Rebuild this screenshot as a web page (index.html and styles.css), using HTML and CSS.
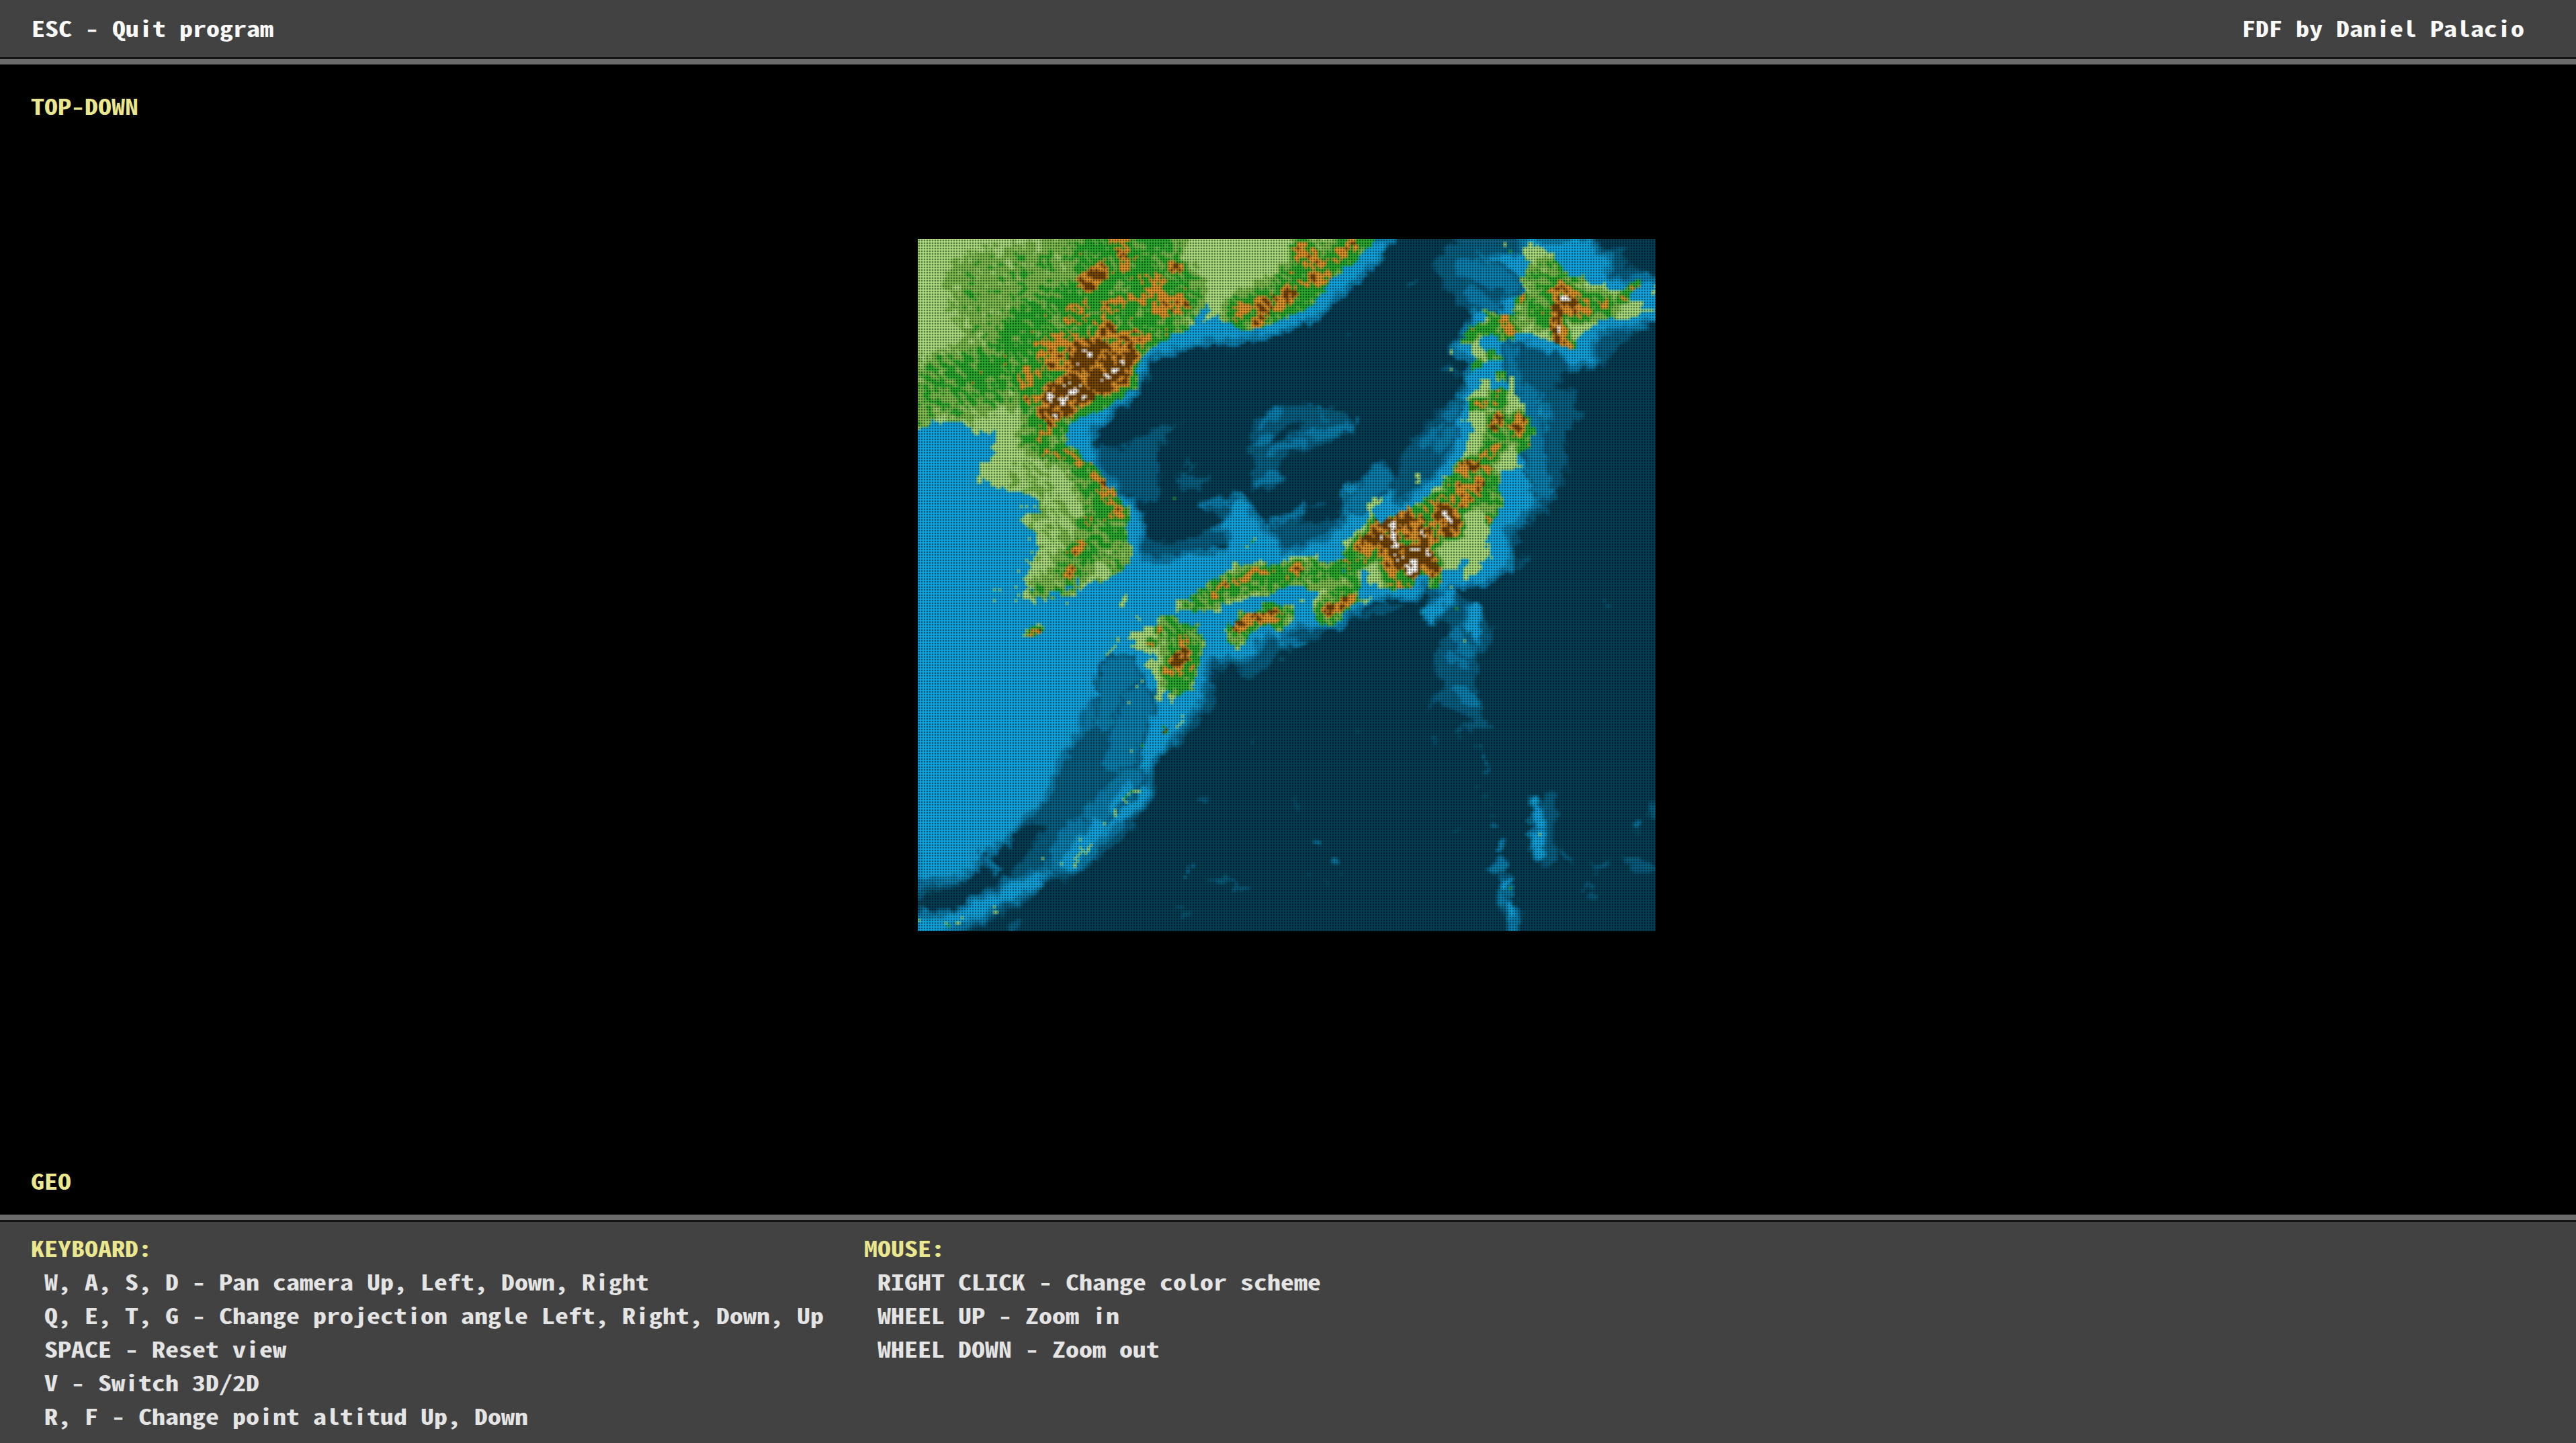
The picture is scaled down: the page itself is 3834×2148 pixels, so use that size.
FILE: index.html
```
<!DOCTYPE html>
<html lang="en">
<head>
<meta charset="utf-8">
<title>FDF</title>
<link rel="stylesheet" href="styles.css">
</head>
<body>
<header class="topbar"><p>ESC - Quit program</p><p>FDF by Daniel Palacio</p></header>
<main class="view">
  <p class="label">TOP-DOWN</p>
  <canvas class="map" id="map" width="1098" height="1030"></canvas>
  <p class="label">GEO</p>
</main>
<footer class="help">
  <section class="keyboard">
    <h2>KEYBOARD:</h2>
    <p>W, A, S, D - Pan camera Up, Left, Down, Right</p>
    <p>Q, E, T, G - Change projection angle Left, Right, Down, Up</p>
    <p>SPACE - Reset view</p>
    <p>V - Switch 3D/2D</p>
    <p>R, F - Change point altitud Up, Down</p>
  </section>
  <section>
    <h2>MOUSE:</h2>
    <p>RIGHT CLICK - Change color scheme</p>
    <p>WHEEL UP - Zoom in</p>
    <p>WHEEL DOWN - Zoom out</p>
  </section>
</footer>
<script src="map.js"></script>
</body>
</html>
```
FILE: styles.css
```
* { box-sizing: border-box; margin: 0; padding: 0; }
body {
  width: 3834px;
  height: 2148px;
  display: flex;
  flex-direction: column;
  overflow: hidden;
  background: #000;
  color: #fafafa;
  font: 700 40px/50px "Noto Sans Mono CJK JP", "Liberation Mono", monospace;
  white-space: nowrap;
}
/* squat terminal lettering, flattened about the baseline */
p, h2 {
  font-size: 40px;
  font-weight: 700;
  transform: scaleY(.79);
  transform-origin: 0 45px;
}
.topbar {
  flex: none;
  height: 96px;
  padding: 12px 77px 0 47px;
  display: flex;
  justify-content: space-between;
  background: #424242;
  border-bottom: 8px solid #6b6b6b;
  box-shadow: inset 0 -3px #141414;
}
.view {
  flex: none;
  height: 1712px;
  padding: 32px 0 30px 46px;
  display: flex;
  flex-direction: column;
  justify-content: space-between;
}
.label, .help h2 { color: #ebe78e; }
.map { display: block; width: 1098px; height: 1030px; margin: 0 0 165px 1320px; }
.help {
  flex: 1;
  padding: 12px 46px 0;
  display: flex;
  background: #424242;
  border-top: 8px solid #6b6b6b;
  box-shadow: inset 0 3px #141414;
  color: #e4e4e4;
}
.keyboard { width: 1240px; }
.help p { padding-left: 20px; }
```
FILE: map.js
```
// Relief map of the Sea of Japan. Coordinates are in map units, 329.4 x 309.
const W = 275, H = 258, S = 275 / 329.4;

const SHELF = [0,80,66,80,84,72,97,66,94,58,99,48,108,43,122,25,134,25,150,34,200,2,205,0,213,0,206,8,197,18,186,27,178,35,168,39,158,43,145,44,128,46,113,50,108,52,103,54,100,61,99,68,93,73,85,79,79,85,78,93,80,101,85,107,92,114,97,119,101,125,100,133,99,139,104,143,118,140,137,138,139,132,132,129,139,122,139,115,146,115,151,125,160,132,164,138,178,135,184,132,190,125,191,110,201,107,210,111,213,118,218,114,225,110,231,103,238,94,239,80,239,72,244,67,243,61,246,55,239,51,239,47,246,39,248,30,262,26,263,21,246,17,244,9,259,6,269,6,269,0,301,0,302,6,309,7,308,17,315,20,323,17,325,15,331,20,331,36,324,38,314,41,305,42,302,45,303,57,289,56,284,51,275,48,264,46,264,52,269,57,272,65,279,71,281,80,279,87,279,115,273,121,269,126,263,128,263,137,265,140,265,146,259,149,255,153,239,155,240,161,228,169,227,165,232,160,230,155,227,154,222,161,214,159,206,161,198,164,191,169,187,174,178,173,168,172,163,177,172,180,162,181,158,178,153,179,151,185,145,189,137,187,131,187,128,205,120,216,109,229,104,234,103,243,104,248,93,259,80,270,79,275,70,281,57,284,53,290,40,297,32,301,18,307,8,310,-1,310,-1,300,11,302,22,297,26,294,36,292,42,285,55,282,65,275,63,267,72,259,83,253,88,245,95,238,93,233,98,225,104,211,100,195,97,191,85,191,79,206,74,211,71,222,61,239,57,250,46,261,40,269,28,275,26,281,18,285,-1,286];

const SLOPE = [
 [79,206,104,206,104,234,93,259,57,284,30,291,-1,306,-1,285,18,285,40,269,61,239],
 [148,81,160,75,172,74,186,76,193,80,191,86,180,92,168,95,160,101,165,106,156,114,149,110,151,101,148,95],
 [90,93,100,87,108,84,117,82,112,88,106,94,107,106,107,117,100,118,92,112,80,102,78,96,82,92],
 [99,130,107,135,123,134,134,126,141,132,118,143,104,144,99,140],
 [127,118,141,113,150,117,153,127,161,126,172,120,183,118,178,124,186,124,190,130,178,137,160,138,140,138,132,132,134,122],
 [115,105,132,105,126,111,116,111],
 [189,111,196,106,203,100,208,98,212,106,218,92,225,84,232,77,239,71,246,65,246,100,219,119,207,121,189,128],
 [229,11,235,3,244,-1,272,-1,272,30,250,38,240,27,234,21],
 [219,20,224,18,222,21,217,23], [229,60,236,57,243,61,235,60],
 [301,-1,308,4,315,5,314,12,319,13,326,15,322,20,315,21,309,18],
 [264,46,283,50,289,56,304,53,305,57,289,59,284,65,293,67,292,73,296,78,288,87,290,97,289,104,288,110,284,112,284,117,273,126,268,128,268,134,265,139,260,130,274,110,276,71,266,57],
 [303,41,319,41,319,44,311,47,310,51,305,57,300,52],
 [227,156,239,156,248,161,253,166,256,174,256,181,250,187,249,192,248,198,252,201,249,206,250,212,256,218,239,219,246,214,241,209,233,206,225,212,230,206,231,203,234,197,230,188,232,181,239,174,234,171,224,170,229,165],
 [219,162,208,168,199,167,191,172,172,181,162,185,157,191,148,195,138,190,132,192,133,207,129,211,118,224,104,236,100,222,128,180],
 [104,232,106,240,106,248,96,262,82,275,70,285,58,287,50,295,35,303,20,309,0,310,0,300,50,275]
];
const TROUGH = [
 [-1,294,18,287,27,281,40,268,52,261,57,262,50,270,42,282,30,291,18,299,4,300],
 [154,94,162,85,171,81,170,86,158,92], [172,122,186,119,180,126,170,128]
];
const BANKS = [ // x1, y1, x2, y2, width, brightness
 [172,88,191,84,4,2],[158,94,172,90,4,2],[153,82,162,77,4,2],[178,75,182,80,2,2],[151,90,156,88,3,2],[151,108,160,106,5,2],
 [158,127,172,121,2.5,2],[128,119,139,117,3,2],[226,90,236,84,5,2],[232,92,238,86,5,2],[236,80,241,74,4,2],[196,118,206,106,9,2],
 [270,68,278,110,10,2],[263,50,268,66,6,2],[247,168,247,178,9,2],[248,166,248,178,6,3],[241,176,246,184,7,2],[236,185,244,190,4,2],[240,200,248,206,5,2],[229,167,237,158,6,3],
 [244,12,264,20,10,2],[246,24,256,30,6,2],[90,195,88,212,18,2],[98,206,90,232,14,2],[96,240,74,262,11,2],[70,262,62,278,8,2],[34,280,30,276,4,2],[0,289,10,287,2,2],
 [94,244,86,254,4,3],[80,262,68,278,7,3],[275,251,279,256,6,1],[282,250,281,276,6,1],[274,251,277,256,4,3],[277,255,277,265,5,3],[277,265,276,274,5,3],
 [261,284,263,300,5,1],[262,287,262,291,3,3],[261,294,265,299,5,2],[265,298,266,309,5,2],[264,297,265,301,3,3],
 [256,262.5,259,262.5,1.5,2],[258,272,261,269,2,2],[258,280,261,277,3,2],[303,280,308,279,4,1],[317,277,321,277,3,1],[321,280,326,280,5,1],[298,288,301,292,2,1],[328,252,328,256,3,1],
 [320,263,322,261,1.5,2],[287,271,291,278,2,1],[177,270,179,269,1.5,2],[185,278,185.6,279,2,2],[229,226,231,222,1.2,1],[249,226,251,226,1.5,1],[251,229,251,230,1,2],[252,233,252,234,1,2],[253,236,253,237,1,2],
 [249,243,250,243,1,1],[253,247,255,247,1,1],[256.5,250,256.5,251,1,1],[256,257,256.5,257,1,1],[169,250,169,254,1,1],[197.5,220,197.5,221,1,1],[188,283,188.5,283,1,1],[182,287,182.5,287,1,1],[174,283,174,283.5,1,1],[240,263,240,264,1,1],
 [130,285,136,285,2,1],[136,285,141,287,1.5,1],[141,287,147,290,2.5,1],[120,282,121,280,1.5,2],[124,279,124,280,1,2],[125,251,128,250.5,1.3,1],[149,224,149,225,1,1],[118,302,121,302,1.5,1],[117,297,117,298,1,1],[43,306,45,304,4,1],
 [307,163,307.6,163,1,2],[268,145,271,144,2,1],[240,220,241,222,1,1],[137,50,138,50,1,1],[192,42,192,43,1,1],[108,86,110,84,2,1],[119,101,120,99,1.5,1],[122,102,124,101,2,1],[196,81,196,83,1.3,2],[200,167,210,164,3,1]
];
const LAND = [
 [-2,-2,206,-2,203,2,200,6,195,9,190,14,186,17,182,23,177,27,172,31,164,35,158,38,151,40,146,41,142,39,136,38,135,33,131,35,127,37,130,31,129,29,127,29,125,34,121,39,117,42,112,42,113,44,107,47,102,50,98,54,97,57,98,61,98,67,93,68,87,73,83,76,73,79,67,83,66,87,65,91,69,93,75,98,80,102,83,107,89,114,93,120,94,127,93,134,95,137,93,145,90,150,84,151,82,154,77,153,71,156,70,160,66,159,61,160,57,162,54,160,52,163,50,160,46,160,48,155,46,152,49,149,51,143,53,139,52,132,50,130,46,126,51,122,57,123,53,120,52,115,46,112,39,112,35,111,30,108,26,109,28,104,27,101,34,98,32,95,35,89,34,85,27,87,22,84,20,81,14,82,10,81,6,82,3,84,-2,85],
 [47,177,47,176,52,173,58,172,57,175,52,177], [90,164,91,159,94,155,93,161,92,164],
 [108,168,112,167,116,167,117,171,120,172,126,172,126,174,123,175,127,177,129,181,126,187,124,195,122,203,118,202,115,206,113,207,113,202,109,200,109,206,106,205,106,198,104,192,102,191,103,187,107,187,105,184,101,185,96,182,98,178,93,178,94,175,100,175,101,172,105,173],
 [115,161,122,160,125,157,132,152,140,147,141,145,145,146,146,144,150,145,154,144,160,145,166,142,173,142,178,141,179,143,184,145,187,143,191,142,188,137,193,132,198,127,200,123,198,120,200,117,207,115,206,117,202,120,203,124,206,127,210,123,218,120,225,116,229,111,233,109,238,105,239,101,243,97,245,90,247,83,246,77,245,72,244,71,249,67,251,65,251,62,255,62,255,67,259,66,263,67,264,62,265,59,266,69,271,73,273,81,274,87,273,93,269,95,267,97,268,102,260,103,259,110,260,117,259,122,257,124,255,129,254,134,257,140,252,143,251,149,246,150,244,153,243,147,246,143,242,142,241,147,233,147,233,152,230,156,228,156,228,151,225,149,222,152,220,156,206,156,204,157,206,154,201,154,199,148,198,148,197,153,196,156,197,159,201,159,201,162,196,161,193,164,190,168,185,173,180,171,176,166,176,161,179,159,179,156,173,156,168,154,162,156,156,159,148,159,144,162,140,162,136,161,134,167,128,165,120,166,115,164],
 [137,173,142,170,142,166,146,167,154,165,156,162,168,163,168,167,164,172,162,176,158,172,152,173,148,176,144,183,141,183,138,179],
 [169,162,173,158,172,162],
 [273,1,277,3,283,7,288,14,295,17,302,21,305,20,310,23,315,23,322,17,323,18,319,23,319,26,322,28,322,32,328,31,327,32,322,34,316,36,304,36,298,41,293,45,293,50,288,48,279,45,274,42,267,42,261,46,257,43,252,43,250,46,251,48,257,50,262,53,261,54,253,54,250,59,246,58,248,53,246,48,242,46,244,41,252,37,254,35,251,33,255,32,262,34,266,33,266,26,270,24,270,17,272,12,269,4],
 [257,63,260,58,263,60,261,63], [221,110,223,107,221,106,223,103,224,107,223,111], [327,23,330,19,330,22,328,25], [324,25,326,23,326,26]
];
const ISLETS = [ // x, y, elevation
 [261,2,.1],[261,1,.1],[263,5,.5],[264,5,.5],[237.5,49,.1],[237,50,.1],[237,57,.1],[242,80.5,.1],[244,80,.1],[146,136.5,.1],[148,134.5,.4],[149,134,.4],[150,133,.1],[114,115.5,.5],[33,156,.1],[36,156,.1],[34,160,.1],[44,158,.1],[43,155,.1],[44,147,.1],[46,119,.1],[48,119,.1],[51,119,.1],[55,119,.1],[49,133,.1],[50,139,.1],[48,143,.1],[43,161,.1],[66,162,.1],[98,169,.1],[97,168,.1],[84,185,.1],[85,183,.1],[86,182,.1],[88,181,.1],[89,177,.1],[89,179,.1],[97,199,.1],[100,197,.1],
 [109,217,.5],[110,218,.8],[109,219,.8],[110,219,.5],[117,212,.1],[117,214,.1],[116,216,.1],[115,217,.1],[92,250,.1],[92,248,.5],[94,247,.1],[95,246,.4],[97,245,.1],[98,245,.1],[87,254,.1],[87,255,.1],[88,256,.1],[83,260,.1],[72,267,.1],[72,271,.1],[77,270,.1],[76,271,.1],[75,272,.1],[74,273,.1],[72,273,.1],[70,275,.1],[70,276,.1],[71,277,.1],[69,279,.1],[69,278,.1],[91,249,.1],[93,247,.1],[96,246,.1],[71,274,.1],[73,272,.1],[55,276,.1],[64,278,.1],[33,297,.1],[34,299,.1],[35,299,.1],[19,302,.1],[18,304,.1],[17,304,.1],[12,304,.1],[13,305,.4],[0,303,.1],[95,228,.1],[100,225.5,.5],[94,206,.1],[277,265,.1],[264,288.5,.5],[237,155,.1],[239,164.5,.5],[243,179,.1],[136,174,.1]
];
const RANGES = [ // x1, y1, x2, y2, radius, height
 [30,22,62,16,20,.33],[27,36,44,30,12,.32],[15,64,60,52,18,.4],[45,42,80,25,15,.43],[0,75,30,60,10,.36],[82,8,110,24,18,.45],[80,40,105,36,18,.44],[74,0,112,2,8,.4],[60,75,88,60,15,.48],[50,88,74,98,8,.38],[50,105,70,152,14,.23],
 [48,62,58,50,7,.58],[58,50,80,48,10,.64],[80,48,98,44,7,.62],[27,62,42,51,5,.48],[72,52,82,52,10,.86],[62,70,86,59,9,.87],[58,76,70,70,7,.8],[79,50,84,40,5,.76],[89,59,94,50,5,.82],[62,77,56,84,5,.64],[54,89,56,94,3,.56],[62,94,73,99,4,.56],
 [74,52,78,50,1.8,1.08],[82,62,92,54,2,1.08],[58,68,59,74,1.5,1.08],[64,72,71,65,2,1.08],[60,77,61,79,1.3,1.08],[70,73,74,70,1.5,1.05],
 [75,19,80,14,5,.84],[90,0,91,12,4,.66],[67,34,72,28,5,.62],[68,36,84,35,3,.6],[84,30,108,22,5,.6],[100,17,106,17,4,.61],[108,30,116,28,6,.64],[112,12,116,12,3,.66],[48,71,54,70,4,.64],[108,18,109,24,4,.6],
 [160,28,196,4,13,.44],[145,32,165,26,10,.44],[171,5,179,16,6,.66],[182,9,195,1,4,.62],[160,28,165,23,5,.74],[143,30,158,26,4,.6],[151,36,155,28,4,.7],[141,35,143,34,2,.58],[168,15,173,18,4,.58],
 [75,96,90,126,13,.42],[65,150,82,128,10,.38],[55,155,66,148,7,.34],[84,132,92,144,9,.32],[80,104,88,121,5,.64],[71,100,75,98,3,.6],[68,139,72,136,3,.62],[68,147,67,149,3,.66],[73,126,76,124,3,.56],[51,175,53,175,3,.65],
 [116,173,118,190,10,.42],[118,178,118,181,4,.62],[114,188,119,184,4,.74],[111,193,120,191,4,.58],[112,196,118,200,5,.45],[103,179,104,180,2,.6],[107,173,107,174,2,.6],
 [123,161,140,153,7,.4],[140,153,180,148,8,.4],[131,158,136,154,3,.62],[142,152,148,149,3,.6],[150,148,160,147,3,.57],[163,149,169,146,4,.61],[185,148,193,142,6,.4],
 [142,172,160,167,8,.42],[143,172,148,169,4,.7],[148,169,160,167,3.5,.72],[140,178,146,174,5,.42],[180,168,192,158,8,.42],[182,165,192,160,3.5,.72],[192,148,194,157,4,.44],
 [190,145,198,139,6,.5],[198,136,206,132,5,.76],[208,128,212,142,7,.86],[211,127,212,136,2.5,1.12],[216,125,225,131,8,.74],[219,139,220,147,4,1.06],[213,140,215,143,2,1.06],[225,138,228,146,5,.82],[224,128,225,131,1.5,1.08],[226,138,227,140,1.3,1.08],[234,122,237,127,6,.86],[234,122,237,126,1.8,1.08],[228,120,246,112,6,.58],[212,151,222,150,6,.56],
 [240,110,250,114,7,.48],[243,117,249,108,4,.68],[241,110,243,111,3,.76],[256,108,256,120,5,.43],[254,123,254,125,2,.6],[253,104,253,102,3,.62],[243,102,247,100,4,.74],[230,156,231,153,3,.6],
 [253,98,256,88,5,.44],[257,92,252,97,3,.6],[258,90,258,80,6,.42],[257,82,258,79,3.5,.78],[264,84,272,82,6,.46],[266,85,268,80,4,.7],[269,88,271,96,4,.5],[258,72,258,68,4,.54],[247,73,251,73,3,.58],
 [275,15,284,14,8,.37],[277,32,290,14,10,.37],[286,24,294,30,7,.68],[287,27,291,28,3,.85],[286,26,289,26,1.5,1.15],[284,30,285,32,3,.82],[284,36,286,44,4,.78],[285,39,285,40,1.3,1.15],[287,45,292,49,3,.62],[277,34,279,33,4,.56],[294,28,306,29,8,.38],[303,29,307,28,3,.58],[313,26,322,18,3,.52],[267,26,269,25,3,.58],[258,40,263,36,7,.42],[261,36,264,40,4,.62],[244,42,251,39,4,.45],[255,51,258,51,3,.46],[248,56,250,55,3,.42],[260,59,260,60,3,.45],[252,33,254,34,3,.42]
];

function hash(x, y, k) {
  let n = (x * 374761393 + y * 668265263 + k * 2147483647) | 0;
  n = Math.imul(n ^ (n >>> 13), 1274126177);
  return ((n ^ (n >>> 16)) >>> 0) / 4294967295;
}
function noise(x, y, k) {
  const i = Math.floor(x), j = Math.floor(y), u = x - i, v = y - j;
  const a = hash(i, j, k), b = hash(i + 1, j, k), c = hash(i, j + 1, k), d = hash(i + 1, j + 1, k);
  return a + (b - a) * u + (c - a) * v + (a - b - c + d) * u * v;
}
function layer() {
  const c = document.createElement('canvas');
  c.width = W; c.height = H;
  const g = c.getContext('2d', { willReadFrequently: true });
  g.scale(S, S);
  return g;
}
function fill(g, p, color) {
  g.beginPath();
  for (let i = 0; i < p.length; i += 2) g.lineTo(p[i], p[i + 1]);
  g.closePath();
  g.fillStyle = color;
  g.fill();
}
const SEA = ['#054056', '#066284', '#0784b4', '#0aa8e4'];
const sea = layer();
sea.fillStyle = SEA[0];
sea.fillRect(0, 0, 330, 310);
SLOPE.forEach(p => fill(sea, p, SEA[1]));
TROUGH.forEach(p => fill(sea, p, SEA[0]));
fill(sea, SHELF, SEA[3]);
sea.strokeStyle = SEA[2];
sea.lineWidth = 2.4;
sea.lineJoin = 'round';
sea.stroke();
sea.fillStyle = SEA[3];
sea.fillRect(0, 78, 60, 60);
sea.fillRect(0, 90, 26, 180);
fill(sea, [85,192,99,192,100,212,92,228,80,215,72,224,75,211], SEA[2]);
fill(sea, [264,45,275,48,284,51,289,57,283,66,279,71,272,62], SEA[1]);
sea.lineCap = 'round';
BANKS.forEach(([a, b, c, d, w, l]) => {
  if (l > 1 && w > 2) {
    sea.strokeStyle = SEA[l - 1];
    sea.lineWidth = w + 2;
    sea.beginPath(); sea.moveTo(a, b); sea.lineTo(c, d); sea.stroke();
  }
  sea.strokeStyle = SEA[l];
  sea.lineWidth = w;
  sea.beginPath(); sea.moveTo(a, b); sea.lineTo(c, d); sea.stroke();
});
const land = layer();
LAND.forEach(p => fill(land, p, '#fff'));
land.globalCompositeOperation = 'destination-out';
[[189,147,2,2],[252,136,2,1.5],[70,151,2,3],[66,155,3,2],[50,155,2,2],[60,157,2,2]].forEach(r => land.fillRect(...r));

const seaPx = sea.getImageData(0, 0, W, H).data;
const landPx = land.getImageData(0, 0, W, H).data;

function ramp(e) {
  if (e < .24) return [172, 222, 126];
  if (e < .38) return [126, 190, 78];
  if (e < .57) return [42, 172, 48];
  if (e < .76) return [226, 150, 44];
  if (e < 1.05) return [118, 72, 8];
  return [255, 252, 250];
}
function elevation(x, y) {
  let e = .1;
  for (const [a, b, c, d, r, h] of RANGES) {
    const dx = c - a, dy = d - b;
    const t = Math.max(0, Math.min(1, ((x - a) * dx + (y - b) * dy) / (dx * dx + dy * dy || 1)));
    const q = ((x - a - t * dx) ** 2 + (y - b - t * dy) ** 2) / (r * r);
    if (q < 4) e = Math.max(e, h * Math.exp(-q * q * .6));
  }
  const s = noise((x + y) / 3.6, (y - x) / 1.9, 3) - .5;
  const f = noise(x / 1.4, y / 1.4, 5) - .5;
  return e + s * (.12 + e * .44) + f * (.06 + e * .2);
}

const out = layer();
const img = out.createImageData(W, H);
for (let j = 0; j < H; j++) for (let i = 0; i < W; i++) {
  const n1 = noise(i / 2.6, j / 2.6, 1) - .5, n2 = noise(i / 2.6, j / 2.6, 2) - .5;
  const at = k => {
    const x = Math.max(0, Math.min(W - 1, Math.round(i + n1 * k)));
    const y = Math.max(0, Math.min(H - 1, Math.round(j + n2 * k)));
    return (y * W + x) * 4;
  };
  const o = (j * W + i) * 4, p = at(3.6);
  const c = landPx[at(2) + 3] > 127 ? ramp(elevation(i / S, j / S)) : [seaPx[p], seaPx[p + 1], seaPx[p + 2]];
  img.data[o] = c[0]; img.data[o + 1] = c[1]; img.data[o + 2] = c[2]; img.data[o + 3] = 255;
}
ISLETS.forEach(([x, y, e]) => {
  const o = (Math.min(H - 1, Math.round(y * S)) * W + Math.round(x * S)) * 4, c = ramp(e);
  img.data[o] = c[0]; img.data[o + 1] = c[1]; img.data[o + 2] = c[2];
});
out.putImageData(img, 0, 0);

// Enlarge the relief, then punch the gaps between the wires of the mesh.
const map = document.getElementById('map').getContext('2d');
map.drawImage(out.canvas, 0, 0, 1100, 1032);
const cell = document.createElement('canvas');
cell.width = cell.height = 4;
const cg = cell.getContext('2d');
cg.fillStyle = 'rgba(0,0,0,.1)';
cg.fillRect(1, 0, 2, 4);
cg.fillRect(0, 1, 4, 2);
cg.fillStyle = 'rgba(0,0,0,.36)';
cg.fillRect(1, 1, 2, 2);
map.fillStyle = map.createPattern(cell, 'repeat');
map.fillRect(0, 0, 1098, 1030);
```
